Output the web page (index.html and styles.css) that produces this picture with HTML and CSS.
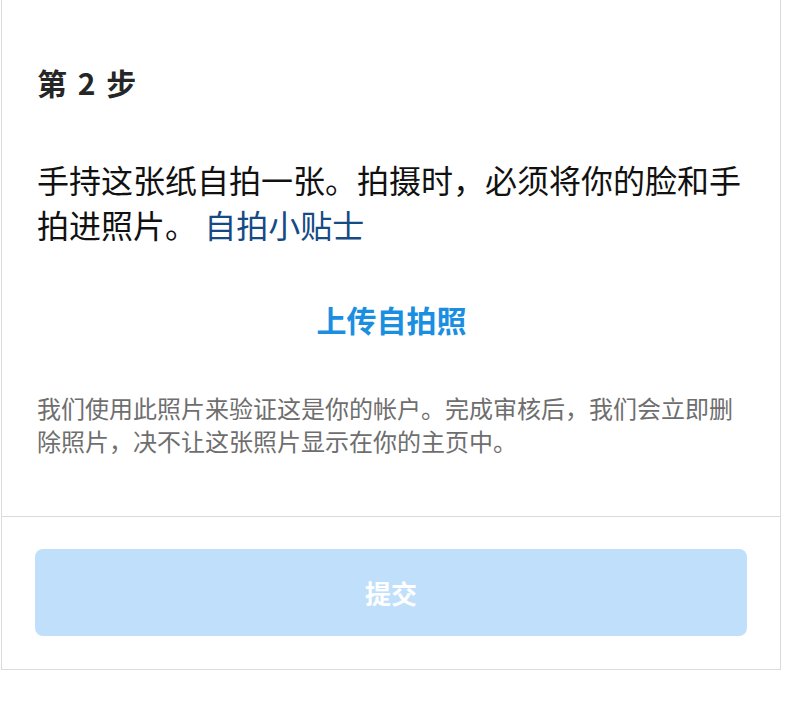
FILE: index.html
```html
<!DOCTYPE html>
<html lang="zh-CN">
<head>
<meta charset="utf-8">
<title>第 2 步</title>
<link rel="stylesheet" href="styles.css">
</head>
<body>
<div class="card">
  <div class="card-body">
    <h2 class="step-title">第 2 步</h2>
    <p class="instructions">手持这张纸自拍一张。拍摄时，必须将你的脸和手拍进照片。 <a class="tips-link" href="#">自拍小贴士</a></p>
    <div class="upload-row"><a class="upload-link" href="#">上传自拍照</a></div>
    <p class="note">我们使用此照片来验证这是你的帐户。完成审核后，我们会立即删除照片，决不让这张照片显示在你的主页中。</p>
  </div>
  <div class="card-footer">
    <button class="submit-btn" type="button" disabled>提交</button>
  </div>
</div>
</body>
</html>
```
FILE: styles.css
```css
html, body {
  margin: 0;
  padding: 0;
  background: #ffffff;
}

body {
  font-family: "Noto Sans CJK SC", "Noto Sans", sans-serif;
  color: #1a1a1a;
}

.card {
  margin-left: 1px;
  width: 780px;
  box-sizing: border-box;
  border: 1px solid #dbdbdb;
  border-top: none;
  background: #ffffff;
}

.card-body {
  padding: 62px 34px 59px 35px;
}

.step-title {
  margin: 0;
  font-size: 30px;
  line-height: 40px;
  font-weight: 700;
  word-spacing: 4px;
  color: #262626;
}

.instructions {
  margin: 55px 0 0;
  font-size: 32px;
  line-height: 45px;
  color: #111111;
}

.tips-link {
  color: #164a85;
  text-decoration: none;
}

.upload-row {
  margin-top: 52px;
  text-align: center;
}

.upload-link {
  display: inline-block;
  font-size: 30px;
  line-height: 40px;
  font-weight: 700;
  color: #1a8ee1;
  text-decoration: none;
}

.note {
  margin: 52px 0 0;
  font-size: 24px;
  line-height: 33px;
  color: #6e6e6e;
}

.card-footer {
  border-top: 1px solid #dbdbdb;
  padding: 32px 33px 33px 33px;
}

.submit-btn {
  display: block;
  width: 100%;
  height: 87px;
  border: none;
  border-radius: 8px;
  background: #c0dffb;
  color: #ffffff;
  font-family: "Noto Sans CJK SC", "Noto Sans", sans-serif;
  font-size: 26px;
  font-weight: 700;
  cursor: default;
}
```
